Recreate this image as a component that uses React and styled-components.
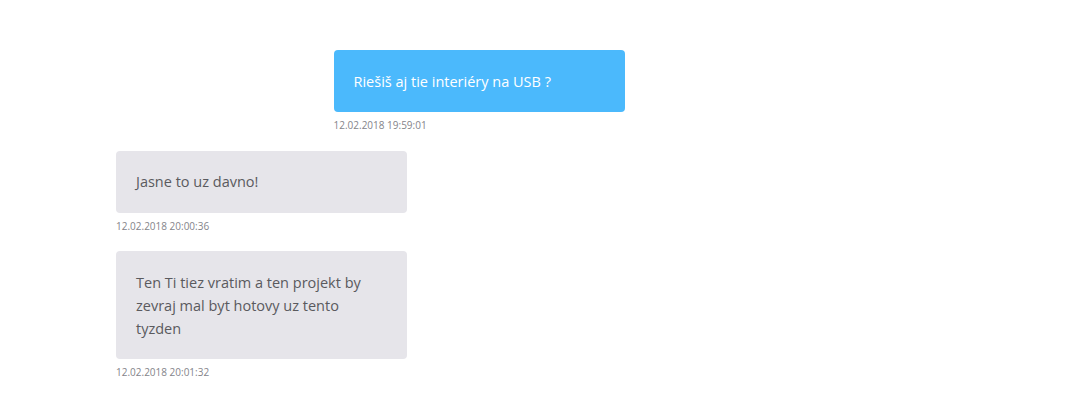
import React from "react";
import styled, { createGlobalStyle } from "styled-components";

const Global = createGlobalStyle`
  html, body { margin: 0; padding: 0; background: #ffffff; }
  body { font-family: "Open Sans", "Noto Sans", Arial, sans-serif; }
`;

const Chat = styled.div`
  width: 508.5px;
  padding: 50px 0 0 116px;
  display: flex;
  flex-direction: column;
`;

const Message = styled.div`
  display: flex;
  flex-direction: column;
  align-items: ${(p) => (p.$mine ? "flex-end" : "flex-start")};
  margin-bottom: 18.5px;
`;

const Group = styled.div`
  display: flex;
  flex-direction: column;
  width: 291px;
`;

const Bubble = styled.div`
  box-sizing: border-box;
  width: 291px;
  padding: 19.5px 20px;
  border-radius: 4px;
  font-size: 14.5px;
  line-height: 23px;
  background: ${(p) => (p.$mine ? "#4bb9fc" : "#e6e5ea")};
  color: ${(p) => (p.$mine ? "#ffffff" : "#5a5a5e")};
`;

const Time = styled.div`
  margin-top: 6px;
  font-size: 10px;
  line-height: 14px;
  color: #84848a;
`;

const messages = [
  { mine: true, text: "Riešiš aj tie interiéry na USB ?", time: "12.02.2018 19:59:01" },
  { mine: false, text: "Jasne to uz davno!", time: "12.02.2018 20:00:36" },
  {
    mine: false,
    text: "Ten Ti tiez vratim a ten projekt by zevraj mal byt hotovy uz tento tyzden",
    time: "12.02.2018 20:01:32",
  },
];

export default function App() {
  return (
    <>
      <Global />
      <Chat>
        {messages.map((m, i) => (
          <Message key={i} $mine={m.mine}>
            <Group>
              <Bubble $mine={m.mine}>{m.text}</Bubble>
              <Time>{m.time}</Time>
            </Group>
          </Message>
        ))}
      </Chat>
    </>
  );
}
